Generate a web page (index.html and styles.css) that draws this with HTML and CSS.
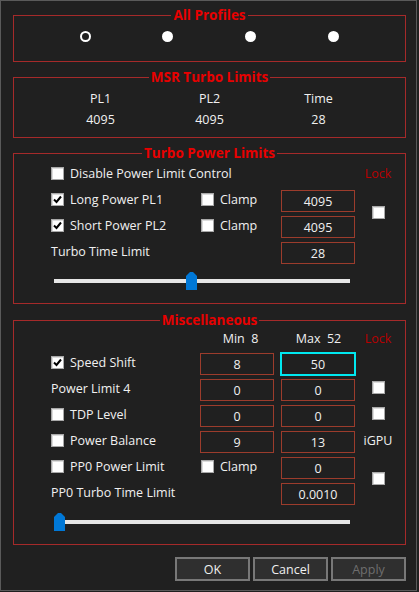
FILE: index.html
```html
<!DOCTYPE html>
<html>
<head>
<meta charset="utf-8">
<link rel="stylesheet" href="styles.css">
</head>
<body>
<div class="window">
  <fieldset class="group g-profiles">
    <legend>All Profiles</legend>
    <div class="profiles">
      <span class="radio"></span>
      <span class="radio on"></span>
      <span class="radio on"></span>
      <span class="radio on"></span>
    </div>
  </fieldset>

  <fieldset class="group g-msr">
    <legend>MSR Turbo Limits</legend>
    <div class="msr">
      <span>PL1</span><span>PL2</span><span>Time</span>
      <span>4095</span><span>4095</span><span>28</span>
    </div>
  </fieldset>

  <fieldset class="group g-turbo">
    <legend>Turbo Power Limits</legend>
    <div class="grid turbo">
      <label class="check c1 wide"><span class="box"></span>Disable Power Limit Control</label>
      <span class="lock c4">Lock</span>

      <label class="check c1"><span class="box"><svg class="tick" width="11" height="11" viewBox="0 0 11 11"><path d="M2 5.5 L4.5 8 L9 2.5" fill="none" stroke="#000" stroke-width="2"/></svg></span>Long Power PL1</label>
      <label class="check c2 clamp"><span class="box"></span>Clamp</label>
      <span class="field c3">4095</span>
      <span class="box c4 lockbox lb-turbo"></span>

      <label class="check c1"><span class="box"><svg class="tick" width="11" height="11" viewBox="0 0 11 11"><path d="M2 5.5 L4.5 8 L9 2.5" fill="none" stroke="#000" stroke-width="2"/></svg></span>Short Power PL2</label>
      <label class="check c2 clamp"><span class="box"></span>Clamp</label>
      <span class="field c3">4095</span>

      <span class="text c1">Turbo Time Limit</span>
      <span class="field c3">28</span>
    </div>
    <div class="slider"><span class="thumb" style="margin-left:132px"><svg width="11" height="19" viewBox="0 0 11 19"><path d="M0 5 L4 1 L7 1 L11 5 V19 H0 Z" fill="#0078d7"/></svg></span></div>
  </fieldset>

  <fieldset class="group g-misc">
    <legend>Miscellaneous</legend>
    <div class="grid misc">
      <span class="head c2">Min  8</span>
      <span class="head c3">Max  52</span>
      <span class="lock c4">Lock</span>

      <label class="check c1"><span class="box"><svg class="tick" width="11" height="11" viewBox="0 0 11 11"><path d="M2 5.5 L4.5 8 L9 2.5" fill="none" stroke="#000" stroke-width="2"/></svg></span>Speed Shift</label>
      <span class="field c2">8</span>
      <span class="field focus c3">50</span>

      <span class="text c1">Power Limit 4</span>
      <span class="field c2">0</span>
      <span class="field c3">0</span>
      <span class="box c4 lockbox"></span>

      <label class="check c1"><span class="box"></span>TDP Level</label>
      <span class="field c2">0</span>
      <span class="field c3">0</span>
      <span class="box c4 lockbox"></span>

      <label class="check c1"><span class="box"></span>Power Balance</label>
      <span class="field c2">9</span>
      <span class="field c3">13</span>
      <span class="text igpu c4">iGPU</span>

      <label class="check c1"><span class="box"></span>PP0 Power Limit</label>
      <label class="check c2 clamp"><span class="box"></span>Clamp</label>
      <span class="field c3">0</span>
      <span class="box c4 lockbox lb-pp0"></span>

      <span class="text c1">PP0 Turbo Time Limit</span>
      <span class="field c3">0.0010</span>
    </div>
    <div class="slider"><span class="thumb" style="margin-left:0px"><svg width="11" height="19" viewBox="0 0 11 19"><path d="M0 5 L4 1 L7 1 L11 5 V19 H0 Z" fill="#0078d7"/></svg></span></div>
  </fieldset>

  <div class="buttons">
    <button class="btn">OK</button>
    <button class="btn">Cancel</button>
    <button class="btn disabled">Apply</button>
  </div>
</div>
</body>
</html>
```

FILE: styles.css
```css
html, body {
  margin: 0;
  padding: 0;
  background: #202020;
}

body {
  font-family: "Open Sans", "Noto Sans", "DejaVu Sans", sans-serif;
  font-size: 12.5px;
  color: #f0f0f0;
}

.window {
  box-sizing: border-box;
  width: 417px;
  height: 591px;
  border: 1px solid #5a5a5a;
  background: #202020;
  padding-top: 7px;
}

.group {
  box-sizing: border-box;
  width: 393px;
  min-width: 0;
  margin: 0 0 0 12px;
  padding: 0;
  border: 1px solid #a52a2a;
}

.group legend {
  margin: 0 auto;
  padding: 0 2px;
  height: 15px;
  line-height: 15px;
  font-weight: 700;
  font-size: 13.5px;
  color: #e80000;
}

.g-msr { margin-top: 8px; }
.g-turbo { margin-top: 8px; }
.g-misc { margin-top: 9px; }

/* profiles */
.profiles {
  box-sizing: border-box;
  height: 38px;
  padding: 8px 0 0 30px;
  display: grid;
  grid-template-columns: repeat(4, 82.67px);
  align-items: start;
  justify-items: center;
}

.radio {
  box-sizing: border-box;
  width: 11px;
  height: 11px;
  border-radius: 50%;
  border: 2px solid #ffffff;
}

.radio.on {
  background: #ffffff;
}

/* msr */
.msr {
  box-sizing: border-box;
  height: 52px;
  padding: 3px 0 0 32px;
  display: grid;
  grid-template-columns: repeat(3, 109px);
  grid-auto-rows: 21px;
  align-items: center;
  justify-items: center;
  line-height: 21px;
}

/* shared grid */
.grid {
  display: grid;
  padding-left: 37px;
  grid-template-columns: 149px 81px 75px 44px;
  align-items: center;
}

.turbo {
  padding-top: 1px;
  grid-template-rows: repeat(4, 26px);
}

.misc {
  grid-template-rows: 23px repeat(6, 26px);
}

.c1 { grid-column: 1; }
.c2 { grid-column: 2; }
.c3 { grid-column: 3; }
.c4 { grid-column: 4; }
.wide { grid-column: 1 / 4; }

.check {
  display: flex;
  align-items: center;
  gap: 6px;
  white-space: nowrap;
  margin-bottom: 3px;
}

.text {
  white-space: nowrap;
  margin-bottom: 3px;
}

.clamp {
  margin-left: 1px;
}

.box {
  box-sizing: border-box;
  width: 13px;
  height: 13px;
  flex: none;
  background: #ffffff;
  border: 1px solid #a9a9a9;
  box-shadow: inset 1px 1px 0 #dcdcdc;
  display: flex;
  align-items: center;
  justify-content: center;
}

.tick {
  display: block;
}

.lockbox {
  justify-self: center;
  margin-bottom: 5px;
}

.lb-turbo {
  grid-row: 2 / 4;
  margin-bottom: 4px;
}

.lb-pp0 {
  grid-row: span 2;
  margin-bottom: 6px;
}

.lock {
  justify-self: center;
  color: #b80000;
  margin-bottom: 3px;
}

.igpu {
  justify-self: center;
}

.head {
  justify-self: center;
  width: 74px;
  text-align: center;
  white-space: pre;
  margin-bottom: 3px;
}

.field {
  box-sizing: border-box;
  width: 74px;
  height: 22px;
  border: 1px solid #9c3c2c;
  display: flex;
  align-items: center;
  justify-content: center;
}

.field.focus {
  width: 76px;
  height: 24px;
  margin-left: -1px;
  border: 2px solid #00e8f0;
}

/* slider */
.slider {
  width: 296px;
  height: 19px;
  margin: 5px 0 13px 40px;
  background: linear-gradient(#e6e6e6, #e6e6e6) 0 8px / 100% 4px no-repeat;
  display: flex;
}

.thumb {
  display: block;
  width: 11px;
  height: 19px;
}

.thumb svg {
  display: block;
}

/* buttons */
.buttons {
  width: 393px;
  margin: 12px 0 0 12px;
  display: flex;
  justify-content: flex-end;
  gap: 3px;
}

.btn {
  box-sizing: border-box;
  width: 75px;
  height: 24px;
  padding: 0;
  border: 2px solid #787878;
  background: #2f2f2f;
  color: #f0f0f0;
  font-family: "Open Sans", "Noto Sans", "DejaVu Sans", sans-serif;
  font-size: 12.5px;
}

.btn.disabled {
  color: #6e6e6e;
}
```
